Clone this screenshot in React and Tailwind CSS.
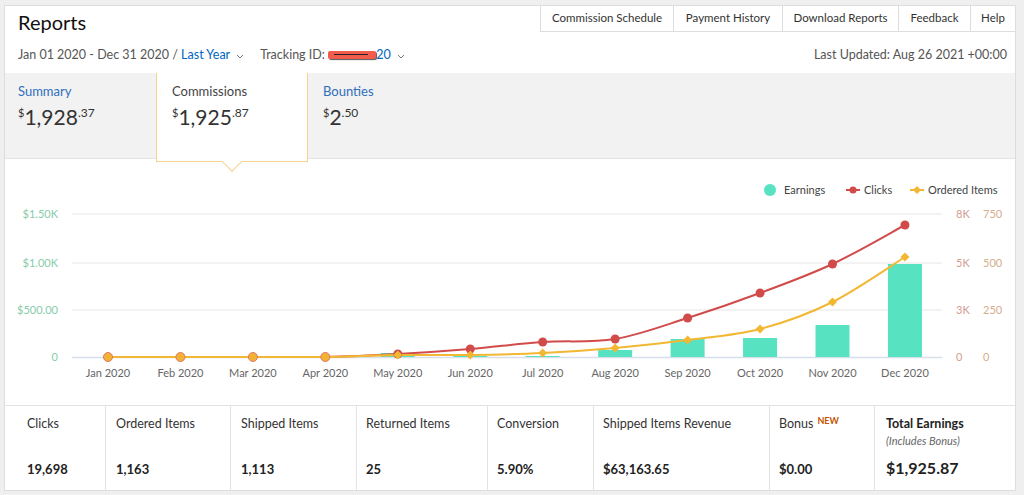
import React from "react";

const months = ["Jan", "Feb", "Mar", "Apr", "May", "Jun", "Jul", "Aug", "Sep", "Oct", "Nov", "Dec"];
const X0 = 108;
const STEP = 72.45;
const BASE = 357;

// page-space y values read off the chart
const clicks = [357, 357, 357, 357, 354, 349, 342, 339, 318, 293, 264, 225];
const ordered = [357, 357, 357, 357, 355, 355, 353, 348, 340, 329, 302, 257];
const bars = [357, 357, 357, 357, 353, 356, 356, 350, 339, 338, 325, 264];

const tabs = [
  { label: "Commission Schedule", w: "w-[133px]" },
  { label: "Payment History", w: "w-[109px]" },
  { label: "Download Reports", w: "w-[116px]" },
  { label: "Feedback", w: "w-[72px]" },
  { label: "Help", w: "w-[45px]" },
];

const stats = [
  { label: "Clicks", value: "19,698", w: "w-[101px]", pl: "pl-[22px]" },
  { label: "Ordered Items", value: "1,163", w: "w-[125px]", pl: "pl-[10px]" },
  { label: "Shipped Items", value: "1,113", w: "w-[126px]", pl: "pl-[10px]" },
  { label: "Returned Items", value: "25", w: "w-[131px]", pl: "pl-[9px]" },
  { label: "Conversion", value: "5.90%", w: "w-[106px]", pl: "pl-[9px]" },
  { label: "Shipped Items Revenue", value: "$63,163.65", w: "w-[176px]", pl: "pl-[9px]" },
];

function spline(pts) {
  let d = `M${pts[0][0]},${pts[0][1]}`;
  for (let i = 0; i < pts.length - 1; i++) {
    const p0 = pts[i - 1] || pts[i];
    const p1 = pts[i];
    const p2 = pts[i + 1];
    const p3 = pts[i + 2] || p2;
    const c1x = p1[0] + (p2[0] - p0[0]) / 6;
    const c1y = p1[1] + (p2[1] - p0[1]) / 6;
    const c2x = p2[0] - (p3[0] - p1[0]) / 6;
    const c2y = p2[1] - (p3[1] - p1[1]) / 6;
    d += ` C${c1x},${Math.min(c1y, BASE)} ${c2x},${Math.min(c2y, BASE)} ${p2[0]},${p2[1]}`;
  }
  return d;
}

const Chevron = () => (
  <svg width="8" height="5" viewBox="0 0 8 5" className="ml-[6px] mt-[3px]">
    <path d="M1 1 L4 4 L7 1" fill="none" stroke="#777" strokeWidth="1" />
  </svg>
);

const Amount = ({ whole, cents }) => (
  <div className="mt-[5px] flex items-start text-[#333]">
    <span className="mt-[1px] text-[11px] leading-[14px]">$</span>
    <span className="text-[21px] leading-[24px]">{whole}</span>
    <span className="mt-[1px] text-[12px] leading-[14px]">{cents}</span>
  </div>
);

function Chart() {
  const xs = months.map((_, i) => X0 + STEP * i);
  const clickPts = xs.map((x, i) => [x, clicks[i]]);
  const orderPts = xs.map((x, i) => [x, ordered[i]]);
  return (
    <svg width="1010" height="246" className="block" style={{ fontFamily: "Lato, sans-serif" }}>
      <g transform="translate(-5 -159)">
        {/* legend */}
        <circle cx="770" cy="190" r="6" fill="#57e2c2" />
        <text x="784" y="194" fontSize="11" fill="#444">Earnings</text>
        <line x1="846" y1="190" x2="860" y2="190" stroke="#d24b4b" strokeWidth="2" />
        <circle cx="853" cy="190" r="3.5" fill="#d24b4b" />
        <text x="864" y="194" fontSize="11" fill="#444">Clicks</text>
        <line x1="910" y1="190" x2="924" y2="190" stroke="#f2b733" strokeWidth="2" />
        <polygon points="917,186 921,190 917,194 913,190" fill="#f2b733" />
        <text x="928" y="194" fontSize="11" fill="#444">Ordered Items</text>

        {/* grid */}
        {[214, 263, 310].map((y) => (
          <line key={y} x1="72" y1={y} x2="942" y2={y} stroke="#e6e6e6" strokeWidth="1" />
        ))}
        <line x1="72" y1={BASE + 0.5} x2="942" y2={BASE + 0.5} stroke="#d6dfea" strokeWidth="1.5" />

        {/* left axis */}
        {[["$1.50K", 214], ["$1.00K", 263], ["$500.00", 310], ["0", 357]].map(([t, y]) => (
          <text key={t} x="58" y={y + 4} fontSize="11" fill="#86cbaa" textAnchor="end">{t}</text>
        ))}
        {/* right axes */}
        {[["8K", 214], ["5K", 263], ["3K", 310], ["0", 357]].map(([t, y]) => (
          <text key={t} x="956" y={y + 4} fontSize="11" fill="#d29d91">{t}</text>
        ))}
        {[["750", 214], ["500", 263], ["250", 310], ["0", 357]].map(([t, y]) => (
          <text key={t} x="983" y={y + 4} fontSize="11" fill="#d6ad8a">{t}</text>
        ))}

        {/* bars */}
        {xs.map((x, i) =>
          bars[i] < BASE ? (
            <rect key={i} x={x - 17} y={bars[i]} width="34" height={BASE - bars[i]} fill="#57e2c2" />
          ) : null
        )}

        {/* x labels */}
        {xs.map((x, i) => (
          <text key={i} x={x} y="377" fontSize="11" fill="#666" textAnchor="middle">
            {months[i]} 2020
          </text>
        ))}

        {/* lines */}
        <path d={spline(clickPts)} fill="none" stroke="#d24b4b" strokeWidth="2" />
        <path d={spline(orderPts)} fill="none" stroke="#f2b733" strokeWidth="2" />
        {clickPts.map(([x, y], i) =>
          i > 3 ? <circle key={i} cx={x} cy={y} r="4.5" fill="#d24b4b" /> : null
        )}
        {orderPts.map(([x, y], i) =>
          i > 3 ? (
            <polygon key={i} points={`${x},${y - 4.5} ${x + 4.5},${y} ${x},${y + 4.5} ${x - 4.5},${y}`} fill="#f2b733" />
          ) : (
            <circle key={i} cx={x} cy={y} r="4.5" fill="#f2b235" stroke="#e0766a" strokeWidth="1" />
          )
        )}
      </g>
    </svg>
  );
}

export default function App() {
  return (
    <div
      className="h-[495px] w-[1024px] bg-[#efefef] pl-1 pt-[5px] text-[#333]"
      style={{ fontFamily: "Lato, 'Open Sans', sans-serif" }}
    >
      <div className="w-[1012px] border border-[#dddddd] bg-white">
        {/* header */}
        <div className="flex h-[67px] justify-between">
          <div className="flex flex-col pl-[13px]">
            <div className="mt-[2px] text-[20px] leading-[28px] text-[#111]">Reports</div>
            <div className="mt-[10px] flex items-center text-[12.5px] leading-[18px] text-[#555]">
              <span>Jan 01 2020 - Dec 31 2020 /&nbsp;</span>
              <span className="text-[#0066c0]">Last Year</span>
              <Chevron />
              <span className="ml-[16px]">Tracking ID:&nbsp;</span>
              <span className="relative inline-flex items-center">
                <span className="h-[8px] w-[48px] rounded-[2px] bg-[#f35c4c] shadow-[1px_1px_1px_#555]" />
                <span className="absolute left-[6px] top-[3px] h-[1px] w-[34px] bg-[#222]" />
              </span>
              <span className="text-[#0066c0]">20</span>
              <Chevron />
            </div>
          </div>
          <div className="flex flex-col items-end">
            <div className="-mt-px flex h-[27px]">
              {tabs.map((t) => (
                <div
                  key={t.label}
                  className={`${t.w} flex items-center justify-center border-b border-l border-[#dddddd] text-[11.5px] text-[#333]`}
                >
                  {t.label}
                </div>
              ))}
            </div>
            <div className="mt-[14px] pr-[8px] text-[12.5px] leading-[18px] text-[#555]">
              Last Updated: Aug 26 2021 +00:00
            </div>
          </div>
        </div>

        {/* summary tabs */}
        <div className="flex h-[86px] items-start border-b border-[#e3e3e3] bg-[#f2f2f2]">
          <div className="w-[151px] pl-[13px] pt-[9px]">
            <div className="text-[13px] leading-[18px] text-[#2f6fbd]">Summary</div>
            <Amount whole="1,928" cents=".37" />
          </div>
          <div className="relative z-10 h-[89px] w-[152px] border-x border-b border-[#f6d38e] bg-white pl-[15px] pt-[9px]">
            <div className="text-[13px] leading-[18px] text-[#444]">Commissions</div>
            <Amount whole="1,925" cents=".87" />
            <div className="absolute bottom-[-8px] left-1/2 h-[14px] w-[14px] -translate-x-1/2 rotate-45 border-b border-r border-[#f6d38e] bg-white" />
          </div>
          <div className="w-[152px] pl-[15px] pt-[9px]">
            <div className="text-[13px] leading-[18px] text-[#2f6fbd]">Bounties</div>
            <Amount whole="2" cents=".50" />
          </div>
        </div>

        {/* chart */}
        <div className="h-[246px]">
          <Chart />
        </div>

        {/* stats */}
        <div className="flex h-[85px] border-t border-[#e3e3e3]">
          {stats.map((s) => (
            <div
              key={s.label}
              className={`${s.w} ${s.pl} flex flex-col justify-between border-r border-[#e3e3e3] pb-[12px] pt-[9px]`}
            >
              <div className="text-[12.5px] leading-[18px] text-[#333]">{s.label}</div>
              <div className="text-[13px] font-bold leading-[18px] text-[#222]">{s.value}</div>
            </div>
          ))}
          <div className="flex w-[105px] flex-col justify-between border-r border-[#e3e3e3] pb-[12px] pl-[9px] pt-[9px]">
            <div className="flex items-start text-[12.5px] leading-[18px] text-[#333]">
              Bonus
              <span className="ml-[4px] text-[9px] font-bold leading-[12px] text-[#c45500]">NEW</span>
            </div>
            <div className="text-[13px] font-bold leading-[18px] text-[#222]">$0.00</div>
          </div>
          <div className="flex flex-1 flex-col pb-[12px] pl-[11px] pt-[9px]">
            <div className="text-[12.5px] font-bold leading-[18px] text-[#222]">Total Earnings</div>
            <div className="text-[11px] italic leading-[15px] text-[#666]">(Includes Bonus)</div>
            <div className="mt-auto text-[16px] font-bold leading-[20px] text-[#222]">$1,925.87</div>
          </div>
        </div>
      </div>
    </div>
  );
}
